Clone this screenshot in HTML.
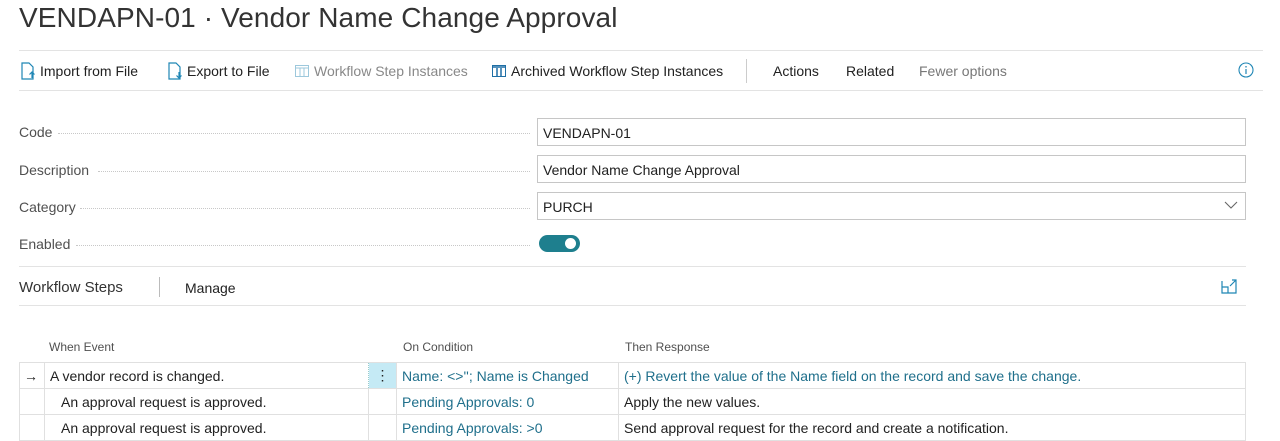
<!DOCTYPE html>
<html><head><style>
*{box-sizing:border-box;margin:0;padding:0}
body{width:1280px;height:441px;overflow:hidden;background:#fff;font-family:"Liberation Sans",sans-serif;color:#212121;position:relative;font-size:14px}
.a{position:absolute;white-space:nowrap}
.hl{position:absolute;height:1px;background:#e3e3e3}
.lbl{color:#505050}
.dots{position:absolute;border-bottom:1px dotted #c8c8c8;height:1px}
.inp{position:absolute;left:537px;width:709px;height:28px;border:1px solid #c6c6c6;padding:6px 5px;font-size:14px}
.tb{color:#212121;font-size:14px}
.link{color:#1f6f8b}
td{border:1px solid #e0e0e0;height:26px;padding:0 5px;font-size:14px;white-space:nowrap}
table{border-collapse:collapse;position:absolute;left:19px;top:362px;width:1227px;table-layout:fixed}
</style></head><body>
<div class="a" style="left:19px;top:2px;font-size:28px;color:#333;letter-spacing:0.1px">VENDAPN-01 · Vendor Name Change Approval</div>
<div class="hl" style="left:19px;top:50px;width:1244px"></div>
<div class="hl" style="left:19px;top:90px;width:1244px"></div>
<svg class="a" style="left:20px;top:62px" width="16" height="18"><path d="M2 1h7l4 4v12H2z" fill="none" stroke="#1f86b5" stroke-width="1.2"/><path d="M12 10v6M9.5 12.5L12 10l2.5 2.5" stroke="#1f86b5" fill="none" stroke-width="1.2"/></svg>
<div class="a tb" style="left:40px;top:63px">Import from File</div>
<svg class="a" style="left:167px;top:62px" width="16" height="18"><path d="M2 1h7l4 4v12H2z" fill="none" stroke="#1f86b5" stroke-width="1.2"/><path d="M12 10v6M9.5 13.5L12 16l2.5-2.5" stroke="#1f86b5" fill="none" stroke-width="1.2"/></svg>
<div class="a tb" style="left:187px;top:63px">Export to File</div>
<svg class="a" style="left:295px;top:65px" width="14" height="12"><rect x="0.5" y="0.5" width="13" height="11" fill="none" stroke="#9dc8dc"/><path d="M0 3h14M5 3v9M9 3v9" stroke="#9dc8dc"/></svg>
<div class="a tb" style="left:314px;top:63px;color:#888">Workflow Step Instances</div>
<svg class="a" style="left:492px;top:65px" width="14" height="12"><rect x="0.5" y="0.5" width="13" height="11" fill="none" stroke="#1f6fa5"/><path d="M0 2h14M5 3v9M9 3v9" stroke="#1f6fa5" stroke-width="1.5"/></svg>
<div class="a tb" style="left:511px;top:63px">Archived Workflow Step Instances</div>
<div class="a" style="left:746px;top:59px;width:1px;height:24px;background:#ccc"></div>
<div class="a tb" style="left:773px;top:63px">Actions</div>
<div class="a tb" style="left:846px;top:63px">Related</div>
<div class="a tb" style="left:919px;top:63px;color:#777">Fewer options</div>
<svg class="a" style="left:1238px;top:62px" width="16" height="16"><circle cx="8" cy="8" r="7" fill="none" stroke="#1f86b5" stroke-width="1.1"/><path d="M8 7v5" stroke="#1f86b5" stroke-width="1.2"/><circle cx="8" cy="4.8" r=".8" fill="#1f86b5"/></svg>

<div class="a lbl" style="left:19px;top:124px">Code</div><div class="dots" style="left:58px;width:472px;top:133px"></div>
<div class="inp" style="top:118px">VENDAPN-01</div>
<div class="a lbl" style="left:19px;top:162px">Description</div><div class="dots" style="left:98px;width:432px;top:171px"></div>
<div class="inp" style="top:155px">Vendor Name Change Approval</div>
<div class="a lbl" style="left:19px;top:199px">Category</div><div class="dots" style="left:80px;width:450px;top:208px"></div>
<div class="inp" style="top:192px">PURCH</div>
<svg class="a" style="left:1224px;top:201px" width="14" height="9"><path d="M1 1l6 6 6-6" fill="none" stroke="#666" stroke-width="1.1"/></svg>
<div class="a lbl" style="left:19px;top:236px">Enabled</div><div class="dots" style="left:76px;width:454px;top:245px"></div>
<div class="a" style="left:539px;top:235px;width:41px;height:17px;border-radius:9px;background:#1e7f8e"></div>
<div class="a" style="left:565px;top:238px;width:11px;height:11px;border-radius:50%;background:#fff"></div>

<div class="hl" style="left:19px;top:266px;width:1227px"></div>
<div class="a" style="left:19px;top:279px;font-size:15px;color:#333">Workflow Steps</div>
<div class="a" style="left:159px;top:277px;width:1px;height:20px;background:#bbb"></div>
<div class="a tb" style="left:185px;top:280px">Manage</div>
<svg class="a" style="left:1221px;top:279px" width="16" height="15"><path d="M1 2v12h14V5" fill="none" stroke="#1f86b5" stroke-width="1.2"/><path d="M1 8h6v6" fill="none" stroke="#1f86b5" stroke-width="1.2"/><path d="M9 7l6-6M11 1h4v4" fill="none" stroke="#1f86b5" stroke-width="1.2"/></svg>
<div class="hl" style="left:19px;top:305px;width:1227px"></div>

<div class="a" style="left:49px;top:340px;font-size:12px;color:#505050">When Event</div>
<div class="a" style="left:403px;top:340px;font-size:12px;color:#505050">On Condition</div>
<div class="a" style="left:625px;top:340px;font-size:12px;color:#505050">Then Response</div>
<table>
<colgroup><col style="width:25px"><col style="width:324px"><col style="width:28px"><col style="width:222px"><col></colgroup>
<tr><td style="padding:0 4px">→</td><td style="border-right:none">A vendor record is changed.</td><td style="background:#c5eaf5;text-align:center;border-left:1px dotted #9cc">⋮</td><td class="link">Name: &lt;&gt;''; Name is Changed</td><td class="link">(+) Revert the value of the Name field on the record and save the change.</td></tr>
<tr><td></td><td style="padding-left:16px">An approval request is approved.</td><td></td><td class="link">Pending Approvals: 0</td><td>Apply the new values.</td></tr>
<tr><td></td><td style="padding-left:16px">An approval request is approved.</td><td></td><td class="link">Pending Approvals: &gt;0</td><td>Send approval request for the record and create a notification.</td></tr>
</table>
</body></html>
